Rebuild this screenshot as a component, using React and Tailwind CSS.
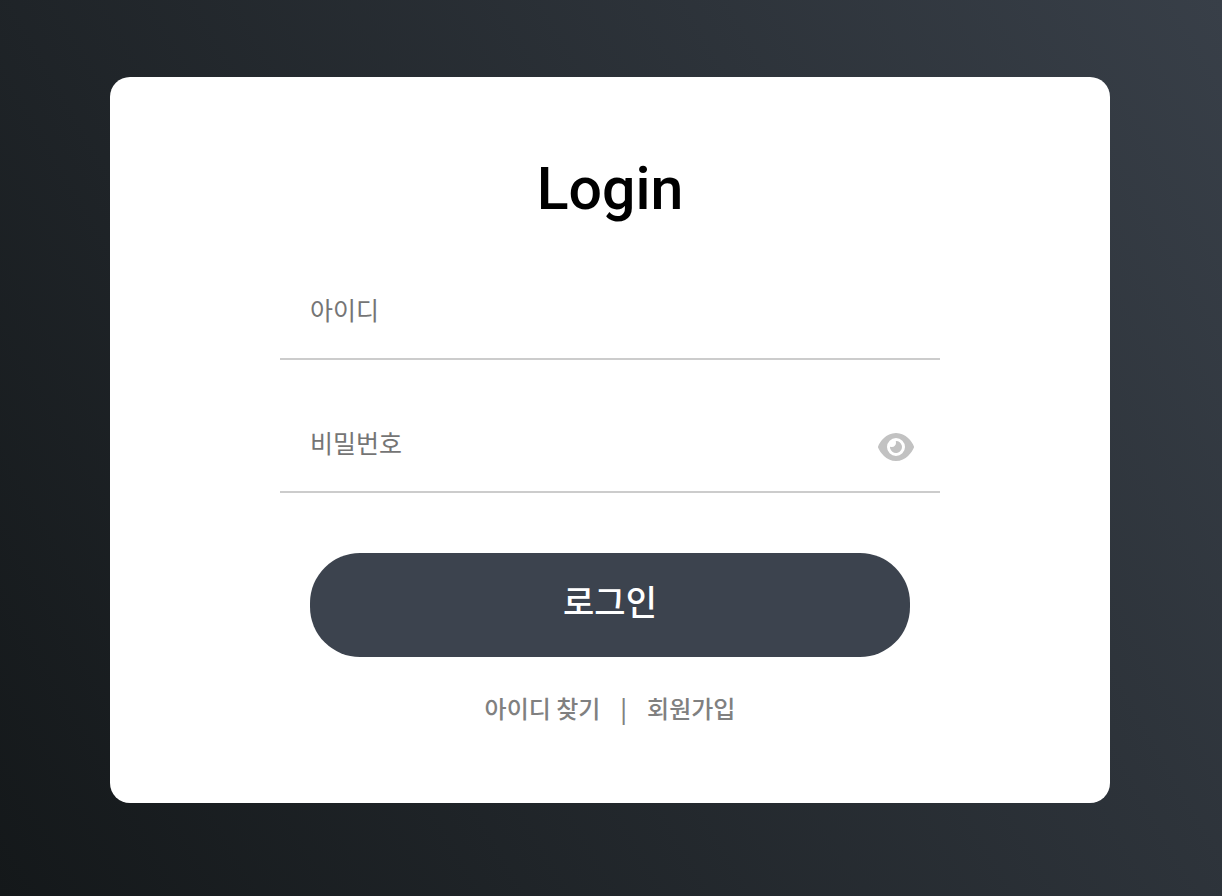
import { useState } from 'react'
import { FaEye } from 'react-icons/fa6'

const inputClass =
  'w-full h-24 pl-[30px] pr-20 pb-1 border-b-2 border-[#cccccc] bg-transparent text-[25px] text-black placeholder:text-[#757575] focus:outline-none'

export default function App() {
  const [id, setId] = useState('')
  const [password, setPassword] = useState('')
  const [visible, setVisible] = useState(false)

  return (
    <div className="min-h-screen flex items-start justify-center pt-[77px] pb-[77px] pr-0.5 bg-[linear-gradient(60deg,#14181a,#383f48)] font-['Noto_Sans_CJK_KR',sans-serif]">
      <main className="w-full max-w-[1000px] rounded-[20px] bg-white px-8 pt-20 pb-[76px] flex flex-col items-center">
        <h1 className="font-['Roboto',sans-serif] text-[59px] leading-[64px] font-medium text-black">
          Login
        </h1>

        <form
          className="w-full max-w-[660px] mt-[43px] flex flex-col"
          onSubmit={(e) => e.preventDefault()}
        >
          <input
            type="text"
            aria-label="아이디"
            placeholder="아이디"
            autoComplete="username"
            className={inputClass}
            value={id}
            onChange={(e) => setId(e.target.value)}
          />

          <div className="relative mt-[37px]">
            <input
              type={visible ? 'text' : 'password'}
              aria-label="비밀번호"
              placeholder="비밀번호"
              autoComplete="current-password"
              className={inputClass}
              value={password}
              onChange={(e) => setPassword(e.target.value)}
            />
            <button
              type="button"
              aria-label="비밀번호 표시"
              className="absolute right-[26px] top-[34px] text-[#c2c2c2] cursor-pointer"
              onClick={() => setVisible(!visible)}
            >
              <FaEye className="w-9 h-8" />
            </button>
          </div>

          <button
            type="submit"
            className="mx-[30px] mt-[60px] h-[104px] pb-2.5 rounded-[50px] bg-[#3c434e] text-[34px] font-medium text-white cursor-pointer"
          >
            로그인
          </button>
        </form>

        <nav className="mt-8 flex items-center gap-5 text-2xl leading-[38px] font-medium text-[#808080]">
          <a href="#find">아이디 찾기</a>
          <span>|</span>
          <a href="#join">회원가입</a>
        </nav>
      </main>
    </div>
  )
}
